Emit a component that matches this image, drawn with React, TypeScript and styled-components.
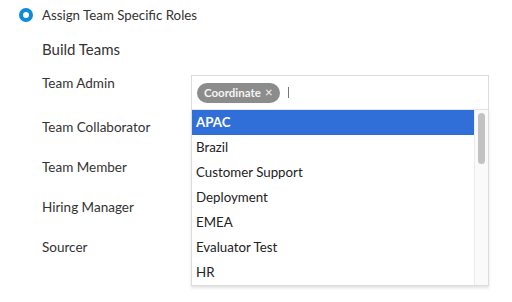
import { FC } from "react";
import styled, { createGlobalStyle } from "styled-components";

const GlobalStyle = createGlobalStyle`
  html, body {
    margin: 0;
    padding: 0;
    background: #ffffff;
  }
  body {
    font-family: Lato, "Open Sans", sans-serif;
    color: #333333;
  }
`;

const SPage = styled.div`
  width: 512px;
  height: 302px;
  overflow: hidden;
  padding: 7px 0 0 19px;
  box-sizing: border-box;
`;

const SRadioRow = styled.label`
  display: flex;
  align-items: center;
  gap: 9px;
  height: 16px;
  font-size: 13.3px;
  color: #333333;
`;

const SRadio = styled.span`
  width: 14px;
  height: 14px;
  border-radius: 50%;
  border: 4px solid #0b8bd9;
  box-sizing: border-box;
  background: #ffffff;
  flex-shrink: 0;
`;

const SSection = styled.div`
  padding: 17px 0 0 23px;
`;

const STitle = styled.h3`
  margin: 0 0 17px;
  font-size: 15px;
  font-weight: 400;
  line-height: 18px;
  color: #333333;
`;

const SForm = styled.div`
  display: flex;
  flex-direction: column;
`;

const SRow = styled.div<{ $first?: boolean }>`
  display: flex;
  align-items: flex-start;
  height: ${(p) => (p.$first ? "44px" : "40px")};
`;

const SLabel = styled.div`
  width: 149px;
  flex-shrink: 0;
  font-size: 13.5px;
  line-height: 16px;
  color: #333333;
`;

const SField = styled.div`
  position: relative;
  width: 298px;
`;

const SInput = styled.div`
  height: 34px;
  box-sizing: border-box;
  border: 1px solid #dcdcdc;
  border-bottom: none;
  display: flex;
  align-items: center;
  padding: 0 6px 0 5px;
  gap: 8px;
  background: #ffffff;
`;

const SChip = styled.span`
  display: inline-flex;
  align-items: center;
  gap: 4px;
  height: 20px;
  padding: 0 8px 0 7px;
  border-radius: 10px;
  background: #8c8c8c;
  color: #f4f4f4;
  font-size: 11.5px;
  font-weight: 700;
`;

const SClose = styled.span`
  font-size: 13px;
  font-weight: 400;
  line-height: 1;
`;

const SCaret = styled.span`
  width: 1px;
  height: 11px;
  background: #777777;
`;

const SMenu = styled.div`
  position: absolute;
  top: 34px;
  left: 0;
  right: 0;
  height: 177px;
  box-sizing: border-box;
  border: 1px solid #dcdcdc;
  border-top: 1px solid #e4e4e4;
  background: #ffffff;
  box-shadow: 0 2px 3px rgba(0, 0, 0, 0.12);
  display: flex;
  z-index: 2;
`;

const SList = styled.ul`
  flex: 1;
  list-style: none;
  margin: 0;
  padding: 0;
`;

const SOption = styled.li<{ $active?: boolean }>`
  height: 25px;
  line-height: 25px;
  padding-left: 4px;
  font-size: 13.3px;
  font-weight: ${(p) => (p.$active ? 700 : 400)};
  background: ${(p) => (p.$active ? "#2f6fd7" : "transparent")};
  color: ${(p) => (p.$active ? "#ffffff" : "#222222")};
  white-space: nowrap;
`;

const STrack = styled.div`
  width: 14px;
  background: #fafafa;
  border-left: 1px solid #ececec;
  display: flex;
  justify-content: center;
  padding-top: 3px;
  box-sizing: border-box;
`;

const SThumb = styled.div`
  width: 7px;
  height: 51px;
  border-radius: 4px;
  background: #c2c2c2;
`;

const roles = ["Team Admin", "Team Collaborator", "Team Member", "Hiring Manager", "Sourcer"];
const teams = ["APAC", "Brazil", "Customer Support", "Deployment", "EMEA", "Evaluator Test", "HR"];

const TeamPicker: FC = () => (
  <SField>
    <SInput>
      <SChip>
        Coordinate <SClose>×</SClose>
      </SChip>
      <SCaret />
    </SInput>
    <SMenu>
      <SList>
        {teams.map((t, i) => (
          <SOption key={t} $active={i === 0}>
            {t}
          </SOption>
        ))}
      </SList>
      <STrack>
        <SThumb />
      </STrack>
    </SMenu>
  </SField>
);

const App: FC = () => (
  <>
    <GlobalStyle />
    <SPage>
      <SRadioRow>
        <SRadio />
        Assign Team Specific Roles
      </SRadioRow>
      <SSection>
        <STitle>Build Teams</STitle>
        <SForm>
          {roles.map((r, i) => (
            <SRow key={r} $first={i === 0}>
              <SLabel>{r}</SLabel>
              {i === 0 && <TeamPicker />}
            </SRow>
          ))}
        </SForm>
      </SSection>
    </SPage>
  </>
);

export default App;
